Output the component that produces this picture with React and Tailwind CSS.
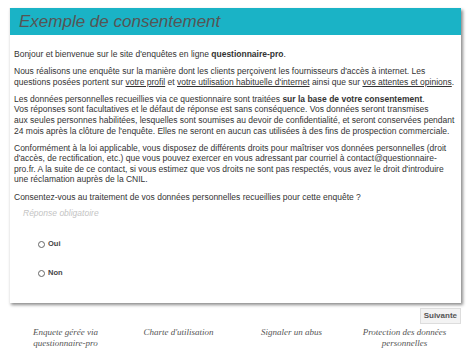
export default function App() {
  const body = { fontFamily: '"Liberation Sans", Arial, sans-serif' };
  const serif = { fontFamily: '"Liberation Serif", "Times New Roman", serif' };
  return (
    <div className="w-[474px] h-[353px] bg-white overflow-hidden" style={body}>
      <div className="ml-[9px] mt-[8px] w-[452px] bg-white shadow-[2px_2px_3px_rgba(0,0,0,0.45)] border-l border-[#eee]">
        <div className="h-[27px] bg-[#1ab3c6] flex items-center pl-[9px]">
          <span className="text-[17px] italic text-[#555] leading-none">Exemple de consentement</span>
        </div>
        <div className="pl-[4px] pr-[2px] pt-[14px] pb-[24px] text-[8.5px] leading-[10.6px] text-[#333]">
          <p className="mb-[6.5px]">Bonjour et bienvenue sur le site d'enquêtes en ligne <b>questionnaire-pro</b>.</p>
          <p className="mb-[6.5px]">
            Nous réalisons une enquête sur la manière dont les clients perçoivent les fournisseurs d'accès à internet. Les questions posées portent sur <u>votre profil</u> et <u>votre utilisation habituelle d'internet</u> ainsi que sur <u>vos attentes et opinions</u>.
          </p>
          <p className="mb-[6.5px]">
            Les données personnelles recueillies via ce questionnaire sont traitées <b>sur la base de votre consentement</b>.<br />
            Vos réponses sont facultatives et le défaut de réponse est sans conséquence. Vos données seront transmises<br />
            aux seules personnes habilitées, lesquelles sont soumises au devoir de confidentialité, et seront conservées pendant 24 mois après la clôture de l'enquête. Elles ne seront en aucun cas utilisées à des fins de prospection commerciale.
          </p>
          <p className="mb-[6.5px]">
            Conformément à la loi applicable, vous disposez de différents droits pour maîtriser vos données personnelles (droit d'accès, de rectification, etc.) que vous pouvez exercer en vous adressant par courriel à contact@questionnaire-<br />pro.fr. A la suite de ce contact, si vous estimez que vos droits ne sont pas respectés, vous avez le droit d'introduire une réclamation auprès de la CNIL.
          </p>
          <p>Consentez-vous au traitement de vos données personnelles recueillies pour cette enquête ?</p>
          <p className="mt-[6px] ml-[9px] italic text-[#c4c4c4]">Réponse obligatoire</p>
          <div className="ml-[24px] mt-[20px] flex flex-col gap-[19px]">
            <label className="flex items-center gap-[3px] text-[7.5px] font-bold text-[#444]">
              <span className="w-[7px] h-[7px] rounded-full border border-[#666] bg-white inline-block" />
              Oui
            </label>
            <label className="flex items-center gap-[3px] text-[7.5px] font-bold text-[#444]">
              <span className="w-[7px] h-[7px] rounded-full border border-[#666] bg-white inline-block" />
              Non
            </label>
          </div>
        </div>
      </div>
      <div className="w-[461px] flex justify-end mt-[5px]">
        <button className="h-[16px] px-[3px] bg-[#f3f3f3] border border-[#ddd] text-[8px] font-bold text-[#555]">Suivante</button>
      </div>
      <div className="ml-[9px] w-[452px] grid grid-cols-4 mt-[3px] text-[9px] leading-[11px] italic text-[#555] text-center" style={serif}>
        <div>Enquete gérée via<br />questionnaire-pro</div>
        <div>Charte d'utilisation</div>
        <div>Signaler un abus</div>
        <div>Protection des données<br />personnelles</div>
      </div>
    </div>
  );
}
